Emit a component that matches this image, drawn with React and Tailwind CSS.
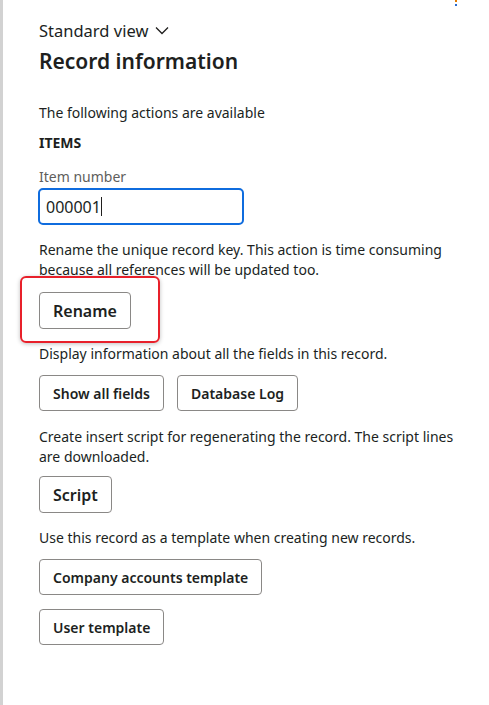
const font = { fontFamily: '"Noto Sans", "Open Sans", sans-serif' };

const Btn = ({ children, big }) => (
  <button
    className={
      "border border-[#8a8886] rounded-[4px] bg-white text-[#201f1e] font-semibold px-[13px] " +
      (big ? "h-[37px] text-[16px]" : "h-[36px] text-[14px]")
    }
  >
    {children}
  </button>
);

export default function App() {
  return (
    <div className="min-h-screen bg-white flex" style={font}>
      <div className="w-[3px] bg-[#d2d2d2] shrink-0"></div>
      <div className="relative flex-1 pl-[36px] pt-[18px] text-[#201f1e]">
        <div className="absolute top-0 left-[452px] flex flex-col gap-[2px]">
          <div className="w-[2px] h-[2px] bg-[#e07b00]"></div>
          <div className="w-[2px] h-[2px] bg-[#2b6cd0]"></div>
        </div>

        <div className="flex items-center gap-[7px] text-[16.5px] leading-[26px]">
          Standard view
          <svg width="14" height="9" viewBox="0 0 14 9" className="mb-[2px]">
            <path d="M1 1.5 L7 7.5 L13 1.5" fill="none" stroke="#201f1e" strokeWidth="1.3" />
          </svg>
        </div>
        <h1 className="text-[21px] font-semibold leading-[30px] mt-[2px]">Record information</h1>

        <div className="text-[14px] leading-[20px] mt-[27px]">The following actions are available</div>
        <div className="text-[14px] font-bold leading-[20px] mt-[10px]">ITEMS</div>

        <div className="text-[14px] text-[#605e5c] leading-[20px] mt-[14px]">Item number</div>
        <div className="mt-[1px] w-[206px] h-[37px] border-2 border-[#0f6cde] rounded-[5px] flex items-center px-[6px] -ml-[1px]">
          <span className="text-[16px]">000001</span>
          <span className="w-[1px] h-[19px] bg-[#201f1e]"></span>
        </div>

        <p className="text-[14px] leading-[20px] mt-[15px] w-[420px]">
          Rename the unique record key. This action is time consuming because all references will be updated too.
        </p>

        <div className="relative mt-[12px] w-fit">
          <Btn big>Rename</Btn>
          <div className="absolute -left-[19px] -top-[16px] w-[140px] h-[67px] border-2 border-[#e8202a] rounded-[6px] shadow-[0_1px_4px_rgba(0,0,0,0.25)] pointer-events-none"></div>
        </div>

        <p className="text-[14px] leading-[20px] mt-[15px]">Display information about all the fields in this record.</p>
        <div className="flex gap-[13px] mt-[11px]">
          <Btn>Show all fields</Btn>
          <Btn>Database Log</Btn>
        </div>

        <p className="text-[14px] leading-[20px] mt-[16px] w-[420px]">
          Create insert script for regenerating the record. The script lines are downloaded.
        </p>
        <div className="mt-[9px]">
          <Btn big>Script</Btn>
        </div>

        <p className="text-[14px] leading-[20px] mt-[15px]">Use this record as a template when creating new records.</p>
        <div className="flex flex-col items-start gap-[14px] mt-[11px]">
          <Btn>Company accounts template</Btn>
          <Btn>User template</Btn>
        </div>
      </div>
    </div>
  );
}
